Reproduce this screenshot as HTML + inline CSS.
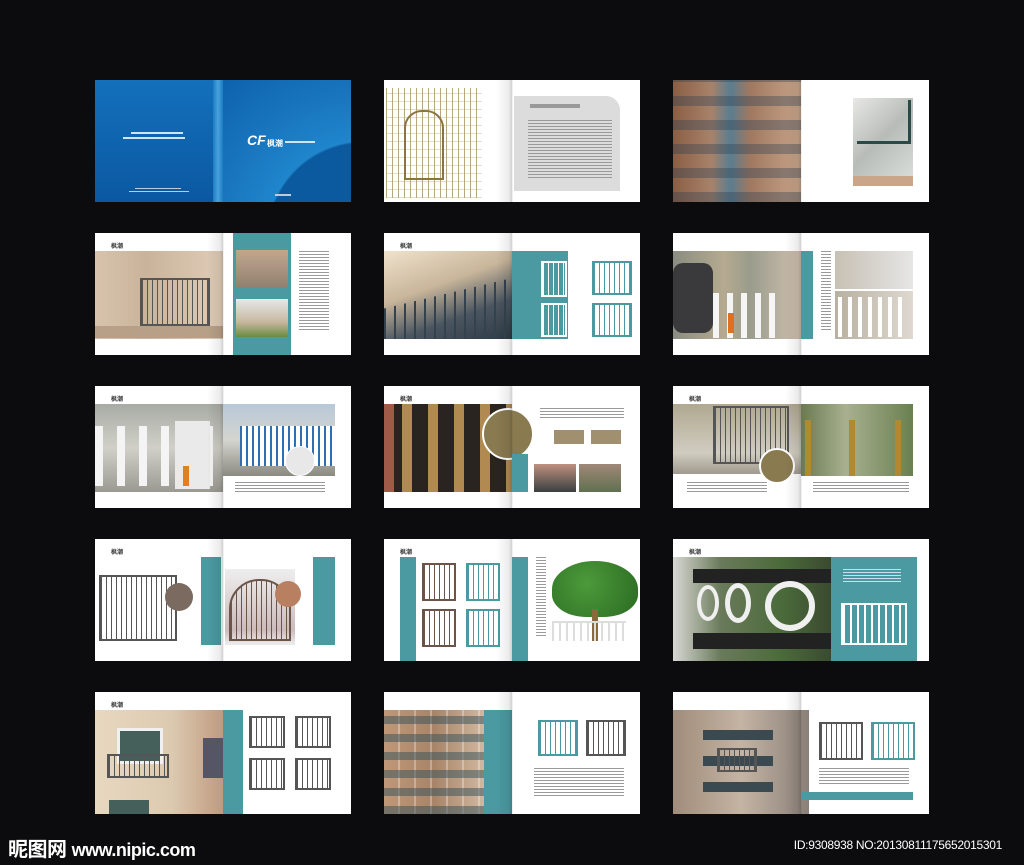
<!DOCTYPE html>
<html><head><meta charset="utf-8"><style>
*{margin:0;padding:0;box-sizing:border-box}
body{width:1024px;height:865px;background:#0c0c0e;position:relative;overflow:hidden;font-family:"Liberation Sans","Noto Sans CJK SC",sans-serif}
.s{position:absolute;width:256px;height:122px;background:#fff;overflow:hidden}
.s>div{position:absolute}
.sp{left:112px;top:0;width:32px;height:122px;background:linear-gradient(90deg,rgba(0,0,0,0) 0%,rgba(0,0,0,.08) 40%,rgba(0,0,0,.18) 50%,rgba(255,255,255,0) 52%,rgba(0,0,0,0) 100%)}
.t{background:#4b9aa1}
.hd{left:16px;top:8px;font-size:6px;color:#333;font-weight:bold}
.tx{background:repeating-linear-gradient(180deg,#9a9a9a 0 1px,transparent 1px 3px)}
.rl{border:2px solid #555;background:repeating-linear-gradient(90deg,#555 0 1px,transparent 1px 5px)}
.rt{border:2px solid #4b9aa1;background:repeating-linear-gradient(90deg,#4b9aa1 0 1px,transparent 1px 5px)}
.rb{border:2px solid #6a5548;background:repeating-linear-gradient(90deg,#6a5548 0 1px,transparent 1px 5px)}
</style></head><body>

<!-- Row 1 -->
<div class="s" style="left:95px;top:80px;background:radial-gradient(ellipse at 75% 40%,#1e83c9 0%,#0d5fa8 45%,#0a4d92 100%)">
 <div style="left:0;top:0;width:128px;height:122px;background:linear-gradient(180deg,#1470bb,#0b58a2)"></div>
 <div style="left:118px;top:0;width:10px;height:122px;background:linear-gradient(90deg,#1a7cc4,#4aa2dc,#1a7cc4)"></div>
 <div style="left:128px;top:0;width:128px;height:122px;background:radial-gradient(circle at 110% 130%,#0b5aa0 45%,#1f86cc 46%,#1874bd 70%,#0e62ad 100%)"></div>
 <div style="left:36px;top:52px;width:52px;height:2px;background:#cfe4f5"></div>
 <div style="left:28px;top:57px;width:62px;height:2px;background:#cfe4f5"></div>
 <div style="left:152px;top:52px;color:#fff;font-size:14px;font-style:italic;font-weight:bold">CF</div>
 <div style="left:172px;top:58px;color:#fff;font-size:8px;font-weight:bold">枫潮</div>
 <div style="left:190px;top:61px;width:30px;height:2px;background:#cfe4f5"></div>
 <div style="left:40px;top:108px;width:46px;height:1px;background:#bcd"></div>
 <div style="left:34px;top:111px;width:60px;height:1px;background:#bcd"></div>
 <div style="left:180px;top:114px;width:16px;height:2px;background:#bcd"></div>
</div>

<div class="s" style="left:384px;top:80px">
 <div style="left:2px;top:8px;width:96px;height:110px;background:repeating-linear-gradient(90deg,#a08a55 0 1px,transparent 1px 6px),repeating-linear-gradient(0deg,rgba(160,138,85,.4) 0 1px,transparent 1px 8px);opacity:.75"></div>
 <div style="left:20px;top:30px;width:40px;height:70px;border:2px solid #8a7440;border-radius:18px 18px 0 0"></div>
 <div class="sp"></div>
 <div style="left:130px;top:16px;width:106px;height:95px;background:#dcdcdc;border-radius:0 14px 0 0"></div>
 <div style="left:146px;top:24px;width:50px;height:4px;background:#999"></div>
 <div class="tx" style="left:144px;top:40px;width:84px;height:60px"></div>
</div>

<div class="s" style="left:673px;top:80px">
 <div style="left:0;top:0;width:128px;height:122px;background:linear-gradient(90deg,#8a5e44,#a8826a 30%,#5a7d8f 45%,#a07860 60%,#c8a58a 100%)"></div>
 <div style="left:0;top:0;width:128px;height:122px;background:repeating-linear-gradient(0deg,rgba(40,60,80,.35) 0 10px,transparent 10px 24px)"></div>
 <div class="sp"></div>
 <div style="left:180px;top:18px;width:60px;height:78px;background:linear-gradient(135deg,#e8e8e6,#b8bcb8 50%,#d8dcd8)"></div>
 <div style="left:184px;top:20px;width:54px;height:44px;border:3px solid #2a4a48;border-top:none;border-left:none"></div>
 <div style="left:180px;top:96px;width:60px;height:10px;background:#c9a68a"></div>
</div>

<!-- Row 2 -->
<div class="s" style="left:95px;top:233px">
 <div class="hd">枫潮</div>
 <div style="left:0;top:18px;width:128px;height:88px;background:linear-gradient(90deg,#d8c3ad,#c9b39b 40%,#e0cdb8)"></div>
 <div style="left:45px;top:45px;width:70px;height:48px" class="rl"></div>
 <div style="left:0;top:93px;width:128px;height:12px;background:#b8a088"></div>
 <div class="sp"></div>
 <div class="t" style="left:138px;top:0;width:58px;height:122px"></div>
 <div style="left:141px;top:17px;width:52px;height:38px;background:linear-gradient(180deg,#c2a78f,#8f8070)"></div>
 <div style="left:141px;top:66px;width:52px;height:38px;background:linear-gradient(180deg,#e6e8ea,#c8b8a0 60%,#6a8a40)"></div>
 <div class="tx" style="left:204px;top:18px;width:30px;height:80px"></div>
</div>

<div class="s" style="left:384px;top:233px">
 <div class="hd">枫潮</div>
 <div style="left:0;top:18px;width:128px;height:88px;background:linear-gradient(160deg,#f0e2cc,#c8b59a 40%,#4a5560 70%,#2e3a44)"></div>
 <div style="left:0;top:45px;width:128px;height:61px;background:repeating-linear-gradient(90deg,#33424d 0 2px,transparent 2px 10px);clip-path:polygon(0 50%,100% 0,100% 100%,0 100%)"></div>
 <div class="sp"></div>
 <div class="t" style="left:128px;top:18px;width:56px;height:88px"></div>
 <div style="left:157px;top:28px;width:26px;height:36px;border:2px solid #fff;background:repeating-linear-gradient(90deg,#fff 0 1px,transparent 1px 5px)"></div>
 <div style="left:157px;top:70px;width:26px;height:34px;border:2px solid #fff;background:repeating-linear-gradient(90deg,#fff 0 1px,transparent 1px 5px)"></div>
 <div class="rt" style="left:208px;top:28px;width:40px;height:34px"></div>
 <div class="rt" style="left:208px;top:70px;width:40px;height:34px"></div>
</div>

<div class="s" style="left:673px;top:233px">
 <div style="left:0;top:18px;width:128px;height:88px;background:linear-gradient(90deg,#8a8d82,#b5aa90 40%,#9a9c8c 60%,#d0c0b0)"></div>
 <div style="left:0;top:30px;width:40px;height:70px;background:#3a3a3c;border-radius:10px"></div>
 <div style="left:40px;top:60px;width:70px;height:45px;background:repeating-linear-gradient(90deg,#f5f5f5 0 6px,transparent 6px 14px)"></div>
 <div style="left:55px;top:80px;width:6px;height:20px;background:#e07020"></div>
 <div class="sp"></div>
 <div class="t" style="left:128px;top:18px;width:12px;height:88px"></div>
 <div class="tx" style="left:148px;top:18px;width:10px;height:80px"></div>
 <div style="left:162px;top:18px;width:78px;height:38px;background:linear-gradient(90deg,#c7c0b4,#e6e6e6)"></div>
 <div style="left:162px;top:58px;width:78px;height:48px;background:linear-gradient(90deg,#b8b0a0,#ded8d0)"></div>
 <div style="left:165px;top:64px;width:70px;height:40px;background:repeating-linear-gradient(90deg,#fff 0 4px,transparent 4px 10px)"></div>
</div>

<!-- Row 3 -->
<div class="s" style="left:95px;top:386px">
 <div class="hd">枫潮</div>
 <div style="left:0;top:18px;width:128px;height:88px;background:linear-gradient(180deg,#a8aba4,#d0d0c8 50%,#9a9a92)"></div>
 <div style="left:0;top:40px;width:128px;height:60px;background:repeating-linear-gradient(90deg,#f4f4f4 0 8px,transparent 8px 22px)"></div>
 <div style="left:80px;top:35px;width:35px;height:68px;background:#eaeaea"></div>
 <div style="left:88px;top:80px;width:6px;height:20px;background:#e08020"></div>
 <div class="sp"></div>
 <div style="left:128px;top:18px;width:112px;height:72px;background:linear-gradient(180deg,#b8c8d8,#d5d5d0 50%,#8a8a80)"></div>
 <div style="left:145px;top:40px;width:95px;height:40px;background:repeating-linear-gradient(90deg,#2f6fb0 0 2px,#fff 2px 6px)"></div>
 <div style="left:190px;top:60px;width:30px;height:30px;border-radius:50%;background:#e8e8e8;border:1px solid #fff"></div>
 <div class="tx" style="left:140px;top:96px;width:90px;height:10px"></div>
</div>

<div class="s" style="left:384px;top:386px">
 <div class="hd">枫潮</div>
 <div style="left:0;top:18px;width:128px;height:88px;background:#2a2420"></div>
 <div style="left:0;top:18px;width:10px;height:88px;background:#a05a48"></div>
 <div style="left:12px;top:18px;width:116px;height:88px;background:repeating-linear-gradient(90deg,transparent 0 6px,#b08a50 6px 16px,transparent 16px 26px)"></div>
 <div style="left:98px;top:22px;width:52px;height:52px;border-radius:50%;background:#8a7a50;border:2px solid #fff"></div>
 <div class="sp"></div>
 <div class="t" style="left:128px;top:68px;width:16px;height:38px"></div>
 <div class="tx" style="left:156px;top:22px;width:84px;height:10px"></div>
 <div style="left:170px;top:44px;width:30px;height:14px;background:#a09070"></div>
 <div style="left:207px;top:44px;width:30px;height:14px;background:#a09070"></div>
 <div style="left:150px;top:78px;width:42px;height:28px;background:linear-gradient(180deg,#c09080,#3a4040)"></div>
 <div style="left:195px;top:78px;width:42px;height:28px;background:linear-gradient(180deg,#a08878,#607050)"></div>
</div>

<div class="s" style="left:673px;top:386px">
 <div class="hd">枫潮</div>
 <div style="left:0;top:18px;width:128px;height:70px;background:linear-gradient(180deg,#b0a890,#d0ccc0 70%,#a09a8e)"></div>
 <div style="left:40px;top:20px;width:76px;height:58px" class="rl"></div>
 <div style="left:86px;top:62px;width:36px;height:36px;border-radius:50%;background:#8a7a50;border:2px solid #fff"></div>
 <div class="tx" style="left:14px;top:96px;width:80px;height:12px"></div>
 <div class="sp"></div>
 <div style="left:128px;top:18px;width:112px;height:72px;background:linear-gradient(90deg,#6a7a50,#a8b090 40%,#6a8050)"></div>
 <div style="left:132px;top:34px;width:6px;height:56px;background:#b08a30"></div>
 <div style="left:176px;top:34px;width:6px;height:56px;background:#b08a30"></div>
 <div style="left:222px;top:34px;width:6px;height:56px;background:#b08a30"></div>
 <div class="tx" style="left:140px;top:96px;width:96px;height:12px"></div>
</div>

<!-- Row 4 -->
<div class="s" style="left:95px;top:539px">
 <div class="hd">枫潮</div>
 <div style="left:4px;top:36px;width:78px;height:66px" class="rl"></div>
 <div style="left:70px;top:44px;width:28px;height:28px;border-radius:50%;background:#7a6a60"></div>
 <div class="t" style="left:106px;top:18px;width:20px;height:88px"></div>
 <div class="sp"></div>
 <div style="left:130px;top:30px;width:70px;height:76px;background:linear-gradient(180deg,#eee,#cbb 80%,#eee)"></div>
 <div class="rb" style="left:134px;top:40px;width:62px;height:62px;border-radius:30px 30px 0 0"></div>
 <div style="left:180px;top:42px;width:26px;height:26px;border-radius:50%;background:#b88060"></div>
 <div class="t" style="left:218px;top:18px;width:22px;height:88px"></div>
</div>

<div class="s" style="left:384px;top:539px">
 <div class="hd">枫潮</div>
 <div class="t" style="left:16px;top:18px;width:16px;height:104px"></div>
 <div class="rb" style="left:38px;top:24px;width:34px;height:38px"></div>
 <div class="rt" style="left:82px;top:24px;width:34px;height:38px"></div>
 <div class="rb" style="left:38px;top:70px;width:34px;height:38px"></div>
 <div class="rt" style="left:82px;top:70px;width:34px;height:38px"></div>
 <div class="sp"></div>
 <div class="t" style="left:128px;top:18px;width:16px;height:104px"></div>
 <div class="tx" style="left:152px;top:18px;width:10px;height:80px"></div>
 <div style="left:168px;top:22px;width:86px;height:56px;border-radius:50% 50% 40% 40%;background:radial-gradient(circle at 40% 40%,#4c9a3a,#2a6a22)"></div>
 <div style="left:208px;top:70px;width:6px;height:32px;background:#8a6a3a"></div>
 <div style="left:168px;top:82px;width:74px;height:20px;background:repeating-linear-gradient(90deg,#ddd 0 2px,transparent 2px 7px);border-top:2px solid #ddd"></div>
</div>

<div class="s" style="left:673px;top:539px">
 <div class="hd">枫潮</div>
 <div style="left:0;top:18px;width:158px;height:104px;background:linear-gradient(90deg,#d8d8d4,#6a7a5a 30%,#4a6a3a 70%,#3a4a30)"></div>
 <div style="left:20px;top:30px;width:138px;height:14px;background:#222"></div>
 <div style="left:20px;top:94px;width:138px;height:16px;background:#222"></div>
 <div style="left:24px;top:46px;width:22px;height:36px;border:4px solid #f0f0f0;border-radius:50%"></div>
 <div style="left:52px;top:44px;width:26px;height:40px;border:5px solid #f0f0f0;border-radius:50%"></div>
 <div style="left:92px;top:42px;width:50px;height:50px;border:6px solid #f0f0f0;border-radius:50%"></div>
 <div class="t" style="left:158px;top:18px;width:86px;height:104px"></div>
 <div style="left:170px;top:30px;width:58px;height:14px;background:repeating-linear-gradient(180deg,#cde 0 1px,transparent 1px 3px)"></div>
 <div style="left:168px;top:64px;width:66px;height:42px;border:2px solid #fff;background:repeating-linear-gradient(90deg,#fff 0 2px,transparent 2px 7px)"></div>
</div>

<!-- Row 5 -->
<div class="s" style="left:95px;top:692px">
 <div class="hd">枫潮</div>
 <div style="left:0;top:18px;width:128px;height:104px;background:linear-gradient(90deg,#e8d8c0,#dccab0 60%,#c09a80)"></div>
 <div style="left:22px;top:36px;width:46px;height:36px;background:#45605a;border:3px solid #f0f0f0"></div>
 <div style="left:12px;top:62px;width:62px;height:24px" class="rl"></div>
 <div style="left:108px;top:46px;width:20px;height:40px;background:#556"></div>
 <div style="left:14px;top:108px;width:40px;height:14px;background:#45605a"></div>
 <div class="t" style="left:128px;top:18px;width:20px;height:104px"></div>
 <div class="rl" style="left:154px;top:24px;width:36px;height:32px"></div>
 <div class="rl" style="left:200px;top:24px;width:36px;height:32px"></div>
 <div class="rl" style="left:154px;top:66px;width:36px;height:32px"></div>
 <div class="rl" style="left:200px;top:66px;width:36px;height:32px"></div>
</div>

<div class="s" style="left:384px;top:692px">
 <div style="left:0;top:18px;width:100px;height:104px;background:linear-gradient(90deg,#c09878,#a88468 50%,#d0b8a0)"></div>
 <div style="left:0;top:18px;width:100px;height:104px;background:repeating-linear-gradient(0deg,rgba(50,80,90,.5) 0 8px,transparent 8px 18px),repeating-linear-gradient(90deg,transparent 0 14px,rgba(255,255,255,.3) 14px 16px)"></div>
 <div class="t" style="left:100px;top:18px;width:28px;height:104px"></div>
 <div class="sp"></div>
 <div class="rt" style="left:154px;top:28px;width:40px;height:36px"></div>
 <div class="rl" style="left:202px;top:28px;width:40px;height:36px"></div>
 <div class="tx" style="left:150px;top:76px;width:90px;height:30px"></div>
</div>

<div class="s" style="left:673px;top:692px">
 <div style="left:0;top:18px;width:136px;height:104px;background:linear-gradient(90deg,#a08c7a,#c4b4a4 50%,#8a8078)"></div>
 <div style="left:30px;top:30px;width:70px;height:70px;background:repeating-linear-gradient(0deg,#3a4a50 0 10px,transparent 10px 26px)"></div>
 <div class="rl" style="left:44px;top:56px;width:40px;height:24px"></div>
 <div class="sp"></div>
 <div class="rl" style="left:146px;top:30px;width:44px;height:38px"></div>
 <div class="rt" style="left:198px;top:30px;width:44px;height:38px"></div>
 <div class="tx" style="left:146px;top:76px;width:90px;height:18px"></div>
 <div class="t" style="left:128px;top:100px;width:112px;height:8px"></div>
</div>

<div style="position:absolute;left:8px;top:833px;color:#fff;font-size:20px;font-weight:bold;letter-spacing:-0.5px">昵图网 <span style="font-size:18px">www.nipic.com</span></div>
<div style="position:absolute;right:22px;top:838px;color:#fff;font-size:12px;letter-spacing:-0.3px">ID:9308938 NO:20130811175652015301</div>
</body></html>
